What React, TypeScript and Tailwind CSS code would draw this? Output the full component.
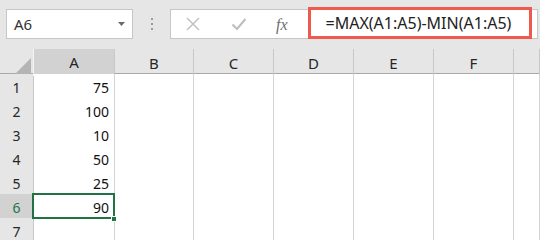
import React from 'react';

const font = { fontFamily: '"Noto Sans", "Open Sans", Arial, sans-serif' };

const columns = ['A', 'B', 'C', 'D', 'E', 'F', ''];
const values = ['75', '100', '10', '50', '25', '90', ''];

function Toolbar() {
  return (
    <div className="flex h-[49px] bg-[#e6e6e6]">
      {/* Name box */}
      <div className="ml-[6px] mt-[9px] flex h-[30px] w-[127px] items-center border border-[#c6c6c6] bg-white pl-[7px] pr-[7px]">
        <span className="text-[15px] text-[#333]">A6</span>
        <svg className="ml-auto" width="7" height="4" viewBox="0 0 7 4">
          <path d="M0 0 L7 0 L3.5 4 Z" fill="#6a6a6a" />
        </svg>
      </div>

      {/* Separator dots */}
      <div className="ml-[18px] mt-[18px] flex h-[12px] flex-col justify-between">
        <span className="block h-[2px] w-[2px] bg-[#9c9c9c]" />
        <span className="block h-[2px] w-[2px] bg-[#9c9c9c]" />
        <span className="block h-[2px] w-[2px] bg-[#9c9c9c]" />
      </div>

      {/* Formula bar */}
      <div className="ml-[17px] mr-[2px] mt-[9px] flex h-[30px] flex-1 items-start border border-[#c6c6c6] bg-white">
        <div className="ml-[15px] mt-[7px]">
          <svg width="14" height="14" viewBox="0 0 14 14">
            <path d="M1 1 L13 13 M13 1 L1 13" stroke="#bdbdbd" strokeWidth="1.4" fill="none" />
          </svg>
        </div>
        <div className="ml-[31px] mt-[7px]">
          <svg width="16" height="14" viewBox="0 0 16 14">
            <path d="M1.5 7.5 L6 12 L14.5 2" stroke="#bdbdbd" strokeWidth="2" fill="none" />
          </svg>
        </div>
        <span
          className="ml-[29px] mt-[3px] text-[16px] italic text-[#6e6e6e]"
          style={{ fontFamily: '"Liberation Serif", "DejaVu Serif", serif' }}
        >
          fx
        </span>
        <div className="-mt-[3px] ml-[20px] flex h-[32px] w-[224px] items-center border-[3px] border-[#f0594e] pl-[15px]">
          <span className="text-[16px] text-[#222]">=MAX(A1:A5)-MIN(A1:A5)</span>
        </div>
      </div>
    </div>
  );
}

function HeaderRow() {
  return (
    <div className="grid h-[25px] grid-cols-[34px_81px_79px_80px_80px_80px_80px_1fr] border-b border-[#a8a8a8] bg-[#e6e6e6]">
      <div className="relative border-r border-[#f4f4f4]">
        <svg className="absolute right-[2px] bottom-[2px]" width="16" height="16" viewBox="0 0 16 16">
          <path d="M16 0 L16 16 L0 16 Z" fill="#b4b4b4" />
        </svg>
      </div>
      {columns.map((c, i) => (
        <div
          key={i}
          className={
            c === 'A'
              ? 'flex items-center justify-center border-r border-[#c8c8c8] border-b-2 border-b-[#217346] bg-[#d2d2d2] pt-[2px] text-[15px] text-[#262626]'
              : 'flex items-center justify-center border-r border-[#c8c8c8] pt-[2px] text-[15px] text-[#262626]'
          }
        >
          {c}
        </div>
      ))}
    </div>
  );
}

function DataRow({ n, value }: { n: number; value: string }) {
  const selected = n === 6;
  return (
    <div className="grid h-[24px] grid-cols-[34px_81px_79px_80px_80px_80px_80px_1fr]">
      <div
        className={
          selected
            ? 'flex items-center justify-center border-r border-b border-[#c8c8c8] bg-[#d2d2d2] pt-[3px] text-[14px] text-[#217346]'
            : 'flex items-center justify-center border-r border-b border-[#c8c8c8] bg-[#e6e6e6] pt-[3px] text-[14px] text-[#262626]'
        }
      >
        {n}
      </div>
      <div className="relative flex items-center justify-end border-r border-b border-[#d4d4d4] bg-white pr-[5px] pt-[3px] text-[14px] text-[#111]">
        {value}
        {selected && (
          <>
            <div className="absolute -left-[2px] -top-[1px] -right-[1px] -bottom-[1px] z-10 border-2 border-[#217346]" />
            <div className="absolute -right-[3px] -bottom-[4px] z-20 h-[6px] w-[6px] border border-white bg-[#217346]" />
          </>
        )}
      </div>
      {[0, 1, 2, 3, 4, 5].map((i) => (
        <div key={i} className="border-r border-b border-[#d4d4d4] bg-white" />
      ))}
    </div>
  );
}

export default function App() {
  return (
    <div className="h-[240px] w-[540px] overflow-hidden bg-white" style={font}>
      <Toolbar />
      <HeaderRow />
      {values.map((v, i) => (
        <DataRow key={i} n={i + 1} value={v} />
      ))}
    </div>
  );
}
